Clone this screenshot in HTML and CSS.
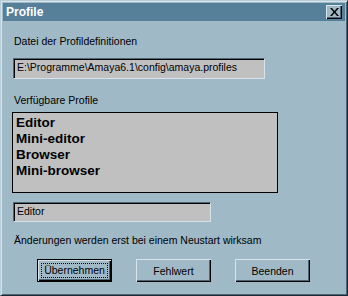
FILE: index.html
```html
<!DOCTYPE html>
<html lang="de">
<head>
  <meta charset="UTF-8" />
  <title>Profile</title>
  <link rel="stylesheet" href="styles.css">
</head>
<body>
  <div class="window">
    <div class="titlebar">
      <span class="title">Profile</span>
      <button class="close" aria-label="Schließen">
        <svg width="9" height="8" viewBox="0 0 9 8"><path d="M0 0h2l2.5 3 2.5-3h2l-3.5 4 3.5 4h-2l-2.5-3-2.5 3h-2l3.5-4z" fill="#000"/></svg>
      </button>
    </div>

    <div class="content">
      <p class="label label-first">Datei der Profildefinitionen</p>
      <div class="field field-path">E:\Programme\Amaya6.1\config\amaya.profiles</div>

      <p class="label label-list">Verfügbare Profile</p>
      <ul class="listbox">
        <li>Editor</li>
        <li>Mini-editor</li>
        <li>Browser</li>
        <li>Mini-browser</li>
      </ul>

      <div class="field field-name">Editor</div>

      <p class="label label-note">Änderungen werden erst bei einem Neustart wirksam</p>

      <div class="buttons">
        <button class="btn btn-default"><span class="focus">Übernehmen</span></button>
        <button class="btn">Fehlwert</button>
        <button class="btn">Beenden</button>
      </div>
    </div>
  </div>
</body>
</html>
```

FILE: styles.css
```css
:root {
  --face: #9fb9c7;
  --title: #56809a;
  --light: #d6e3ea;
  --dark: #4d6675;
  --field: #c0c0c0;
}

* {
  box-sizing: border-box;
  margin: 0;
  padding: 0;
}

html, body {
  width: 348px;
  height: 296px;
  overflow: hidden;
}

body {
  font-family: 'Liberation Sans', Arial, sans-serif;
  font-size: 10.5px;
  color: #000;
  background: var(--face);
}

.window {
  width: 348px;
  height: 296px;
  background: var(--face);
  border-top: 1px solid #b9ced9;
  border-left: 1px solid #b9ced9;
  border-right: 1px solid #1c2b33;
  border-bottom: 1px solid #1c2b33;
  box-shadow: inset 1px 1px 0 var(--light), inset -1px -1px 0 var(--dark);
  padding: 2px;
}

.titlebar {
  height: 18px;
  background: var(--title);
  display: flex;
  align-items: center;
  justify-content: space-between;
  padding: 0 3px 0 3px;
}

.title {
  color: #fff;
  font-weight: bold;
  font-size: 12px;
}

.close {
  width: 16px;
  height: 14px;
  background: var(--face);
  border: none;
  box-shadow: inset 1px 1px 0 var(--light), inset -1px -1px 0 #000, inset -2px -2px 0 var(--dark);
  display: flex;
  align-items: center;
  justify-content: center;
  padding-bottom: 1px;
}

.content {
  padding: 0 0 0 10px;
}

.label {
  height: 13px;
  line-height: 13px;
  padding-left: 1px;
}

.label-first {
  margin-top: 14px;
}

.label-list {
  margin-top: 15px;
}

.label-note {
  margin-top: 12px;
}

.field {
  height: 21px;
  line-height: 17px;
  background: var(--field);
  border-top: 1px solid var(--dark);
  border-left: 1px solid var(--dark);
  border-bottom: 1px solid var(--light);
  border-right: 1px solid var(--light);
  box-shadow: inset 1px 1px 0 #000;
  padding-left: 3px;
  white-space: nowrap;
}

.field-path {
  width: 252px;
  margin-top: 10px;
}

.field-name {
  width: 198px;
  height: 20px;
  margin-top: 9px;
}

.listbox {
  list-style: none;
  width: 266px;
  height: 81px;
  margin-top: 5px;
  margin-left: -1px;
  background: var(--field);
  border: 1px solid #000;
  padding: 2px 0 0 3px;
  font-weight: bold;
  font-size: 13.5px;
}

.listbox li {
  height: 16px;
  line-height: 16px;
}

.buttons {
  display: flex;
  gap: 24px;
  margin-top: 12px;
  padding-left: 24px;
}

.btn {
  width: 75px;
  height: 23px;
  background: var(--face);
  border: none;
  font-family: 'Liberation Sans', Arial, sans-serif;
  font-size: 10.5px;
  color: #000;
  box-shadow: inset 1px 1px 0 var(--light), inset -1px -1px 0 #000, inset -2px -2px 0 var(--dark);
}

.btn-default {
  border: 1px solid #000;
  box-shadow: inset 1px 1px 0 var(--light), inset -1px -1px 0 #000, inset -2px -2px 0 var(--dark);
  padding: 0 2px;
}

.focus {
  display: block;
  border: 1px dotted #000;
  line-height: 13px;
  margin: 0 1px;
}
```
